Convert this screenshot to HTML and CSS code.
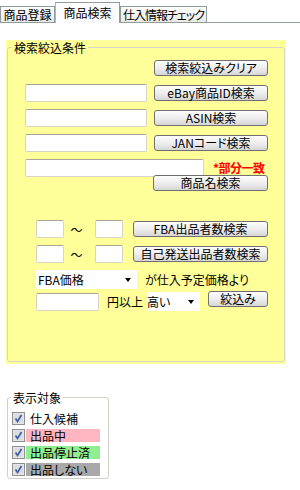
FILE: index.html
```html
<!DOCTYPE html>
<html lang="ja">
<head>
    <meta charset="UTF-8">
    <title>商品検索</title>
    <link rel="stylesheet" href="styles.css">
</head>
<body>
    <div class="tabs">
        <div class="tab">商品登録</div>
        <div class="tab active">商品検索</div>
        <div class="tab wide">仕入情報チェック</div>
    </div>

    <div class="search">
        <fieldset class="group">
            <legend>検索絞込条件</legend>
            <div class="body">
                <div class="row r1">
                    <button class="btn w114">検索絞込みクリア</button>
                </div>
                <div class="row gap7">
                    <input type="text" class="field w122">
                    <button class="btn w114">eBay商品ID検索</button>
                </div>
                <div class="row gap7">
                    <input type="text" class="field w122">
                    <button class="btn w114">ASIN検索</button>
                </div>
                <div class="row gap7">
                    <input type="text" class="field w122">
                    <button class="btn w114">JANコード検索</button>
                </div>
                <div class="row short gap7">
                    <input type="text" class="field w179">
                    <span class="partial">*部分一致</span>
                </div>
                <div class="row short">
                    <button class="btn w115">商品名検索</button>
                </div>
                <div class="row inset r7">
                    <input type="text" class="field w28">
                    <span class="tilde">〜</span>
                    <input type="text" class="field w28">
                    <button class="btn w135">FBA出品者数検索</button>
                </div>
                <div class="row inset gap7">
                    <input type="text" class="field w28">
                    <span class="tilde">〜</span>
                    <input type="text" class="field w28">
                    <button class="btn w135">自己発送出品者数検索</button>
                </div>
                <div class="row inset tall r9">
                    <div class="combo w101"><span>FBA価格</span><i class="arrow"></i></div>
                    <span class="note">が仕入予定価格より</span>
                </div>
                <div class="row inset tall">
                    <input type="text" class="field w63">
                    <span class="note">円以上</span>
                    <div class="combo w53 tight"><span>高い</span><i class="arrow"></i></div>
                    <button class="btn w60 up">絞込み</button>
                </div>
            </div>
        </fieldset>
    </div>

    <fieldset class="target">
        <legend>表示対象</legend>
        <div class="check">
            <svg width="13" height="13" viewBox="0 0 13 13"><rect x="0.5" y="0.5" width="12" height="12" fill="#ececec" stroke="#8e8f8f"/><rect x="1.5" y="1.5" width="10" height="10" fill="#dcdde0"/><path d="M3.5 6.5 L5.5 9.5 L9.5 3" fill="none" stroke="#3f5fa8" stroke-width="1.7"/></svg>
            <span class="label">仕入候補</span>
        </div>
        <div class="check">
            <svg width="13" height="13" viewBox="0 0 13 13"><rect x="0.5" y="0.5" width="12" height="12" fill="#ececec" stroke="#8e8f8f"/><rect x="1.5" y="1.5" width="10" height="10" fill="#dcdde0"/><path d="M3.5 6.5 L5.5 9.5 L9.5 3" fill="none" stroke="#3f5fa8" stroke-width="1.7"/></svg>
            <span class="label pink">出品中</span>
        </div>
        <div class="check">
            <svg width="13" height="13" viewBox="0 0 13 13"><rect x="0.5" y="0.5" width="12" height="12" fill="#ececec" stroke="#8e8f8f"/><rect x="1.5" y="1.5" width="10" height="10" fill="#dcdde0"/><path d="M3.5 6.5 L5.5 9.5 L9.5 3" fill="none" stroke="#3f5fa8" stroke-width="1.7"/></svg>
            <span class="label green">出品停止済</span>
        </div>
        <div class="check">
            <svg width="13" height="13" viewBox="0 0 13 13"><rect x="0.5" y="0.5" width="12" height="12" fill="#ececec" stroke="#8e8f8f"/><rect x="1.5" y="1.5" width="10" height="10" fill="#dcdde0"/><path d="M3.5 6.5 L5.5 9.5 L9.5 3" fill="none" stroke="#3f5fa8" stroke-width="1.7"/></svg>
            <span class="label gray">出品しない</span>
        </div>
    </fieldset>
</body>
</html>
```

FILE: styles.css
```css
* {
    box-sizing: border-box;
}
body {
    margin: 0;
    font-family: "Noto Sans CJK JP", sans-serif;
    font-size: 12px;
    font-feature-settings: "palt";
    color: #000;
    background: #fff;
}
.tabs {
    display: flex;
    align-items: flex-end;
    height: 23px;
    border-bottom: 1px solid #919b9c;
}
.tab {
    width: 55px;
    height: 16px;
    line-height: 15px;
    text-align: center;
    white-space: nowrap;
    border: 1px solid #919b9c;
    border-bottom: none;
    background: linear-gradient(#ffffff, #e8e8e4);
}
.tab.active {
    width: 65px;
    height: 21px;
    line-height: 19px;
    margin-bottom: -1px;
    background: #fcfcfe;
    border-left-color: #b5b5b5;
}
.tab.wide {
    width: 87px;
    letter-spacing: -1px;
}
.search {
    margin: 17px 0 0 6px;
    width: 280px;
    height: 324px;
    padding: 0 1px 2px;
    background: #ffff99;
}
fieldset {
    margin: 0;
    padding: 0;
    border: 1px solid #d6d6c4;
    border-radius: 3px;
}
legend {
    padding: 0 2px;
    margin-left: 4px;
    line-height: 15px;
}
.group {
    height: 100%;
}
.body {
    padding: 4px 16px 0 17px;
}
.row {
    display: flex;
    align-items: center;
    height: 18px;
}
.r1 {
    margin-bottom: 5px;
}
.gap7 {
    margin-top: 7px;
}
.short {
    height: 16px;
    align-items: flex-start;
}
.inset {
    padding-left: 11px;
}
.r7 {
    margin-top: 29px;
}
.tall {
    height: 19px;
}
.r9 {
    margin-top: 7px;
    margin-bottom: 3px;
}
.btn {
    height: 16px;
    margin-left: auto;
    padding: 0;
    font-family: inherit;
    font-size: 12px;
    font-feature-settings: "palt";
    line-height: 14px;
    color: #000;
    white-space: nowrap;
    border: 1px solid #707070;
    border-radius: 3px;
    background: linear-gradient(#fdfdfd, #ececec 55%, #d6d6d6);
}
.btn.up {
    margin-left: 8px;
    align-self: flex-start;
    margin-top: -1px;
}
.field {
    flex-shrink: 0;
    height: 18px;
    margin: 0;
    padding: 0 2px;
    font-family: inherit;
    font-size: 12px;
    border: 1px solid #d8d4c4;
    border-top-color: #aaa594;
    border-radius: 2px;
    background: #fff;
}
.w28 { width: 28px; }
.w53 { width: 53px; }
.w60 { width: 60px; }
.w63 { width: 63px; }
.w101 { width: 101px; }
.w114 { width: 114px; }
.w115 { width: 115px; }
.w122 { width: 122px; }
.w135 { width: 135px; }
.w179 { width: 179px; }
.partial {
    flex-shrink: 0;
    margin: 2px 0 0 9px;
    color: #ff0000;
    font-weight: bold;
    line-height: 14px;
    white-space: nowrap;
    letter-spacing: -0.5px;
}
.tilde {
    width: 31px;
    padding-right: 6px;
    text-align: center;
}
.combo {
    display: flex;
    align-items: center;
    flex-shrink: 0;
    height: 19px;
    padding: 0 6px 0 2px;
    white-space: nowrap;
    background: #fff;
}
.combo.tight {
    margin-left: 4px;
    padding-left: 0;
}
.arrow {
    margin-left: auto;
    width: 0;
    height: 0;
    border-left: 3px solid transparent;
    border-right: 3px solid transparent;
    border-top: 4px solid #000;
}
.note {
    margin-left: 8px;
    white-space: nowrap;
}
.target {
    margin: 26px 0 0 7px;
    width: 102px;
    padding: 5px 0 0 4px;
    border-color: #d0d0c8;
}
.target legend {
    margin-left: -1px;
}
.check {
    display: flex;
    align-items: center;
    height: 17px;
}
.label {
    width: 74px;
    height: 13px;
    margin-left: 1px;
    padding-left: 4px;
    line-height: 13px;
}
.pink { background: #ffb6c1; }
.green { background: #90ee90; }
.gray { background: #a9a9a9; }
```
